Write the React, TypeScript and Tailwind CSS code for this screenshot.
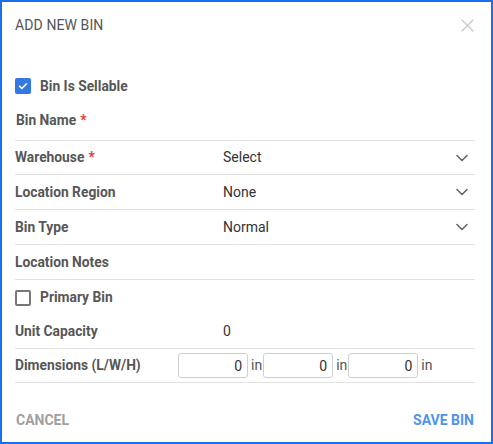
import React, { useState } from 'react';

const Chevron = () => (
  <svg width="14" height="14" viewBox="0 0 14 14" fill="none" className="text-[#666]">
    <path d="M2 4.5l5 5 5-5" stroke="currentColor" strokeWidth="1.6" strokeLinecap="round" strokeLinejoin="round" />
  </svg>
);

const Req = () => <span className="text-[#e53935] ml-1">*</span>;

const Checkbox = ({ checked, onChange }: { checked: boolean; onChange: () => void }) =>
  checked ? (
    <button onClick={onChange} className="w-4 h-4 rounded-[2px] bg-[#3478e5] flex items-center justify-center shrink-0">
      <svg width="12" height="12" viewBox="0 0 12 12" fill="none">
        <path d="M2.5 6.2l2.4 2.3L9.5 3.8" stroke="white" strokeWidth="1.6" strokeLinecap="round" strokeLinejoin="round" />
      </svg>
    </button>
  ) : (
    <button onClick={onChange} className="w-4 h-4 rounded-[2px] border-2 border-[#777] shrink-0" />
  );

const SelectRow = ({ label, value, required, h }: { label: string; value: string; required?: boolean; h: string }) => (
  <div className={`flex items-center border-b border-[#e2e2e2] ${h}`}>
    <div className="w-[208px] font-bold text-[#575757]">
      {label}
      {required && <Req />}
    </div>
    <div className="flex-1 text-[#333] text-[14px]">{value}</div>
    <div className="pr-[6px]">
      <Chevron />
    </div>
  </div>
);

const DimInput = () => (
  <>
    <input
      defaultValue="0"
      className="w-[70px] h-[25px] border border-[#cfcfcf] rounded-[3px] text-right pr-[5px] text-[14px] text-[#333] outline-none"
    />
    <span className="text-[#555] text-[14px] ml-[3px] mr-[1px]">in</span>
  </>
);

export default function App() {
  const [sellable, setSellable] = useState(true);
  const [primary, setPrimary] = useState(false);

  return (
    <div className="w-[493px] h-[444px] bg-white border-2 border-[#1a6ff0] text-[13.8px] font-['Roboto',sans-serif] flex flex-col">
      <div className="flex items-center justify-between pl-[13px] pr-[17px] pt-[2px] h-[44px]">
        <h1 className="text-[14px] text-[#555] tracking-[0.1px]">ADD NEW BIN</h1>
        <svg width="13" height="13" viewBox="0 0 13 13" fill="none">
          <path d="M1 1l11 11M12 1L1 12" stroke="#c9c9c9" strokeWidth="1.4" strokeLinecap="round" />
        </svg>
      </div>

      <div className="pl-[13px] pr-[16px] flex flex-col">
        <div className="flex items-center gap-[9px] h-[34px] mt-[23px]">
          <Checkbox checked={sellable} onChange={() => setSellable(!sellable)} />
          <span className="font-bold text-[#575757]">Bin Is Sellable</span>
        </div>
        <div className="flex items-center border-b border-[#e2e2e2] h-[38px] pl-[1px] pb-[3px]">
          <span className="font-bold text-[#575757]">
            Bin Name
            <Req />
          </span>
        </div>
        <SelectRow label="Warehouse" value="Select" required h="h-[34px]" />
        <SelectRow label="Location Region" value="None" h="h-[35px]" />
        <SelectRow label="Bin Type" value="Normal" h="h-[35px]" />
        <div className="flex items-center border-b border-[#e2e2e2] h-[35px]">
          <span className="font-bold text-[#575757]">Location Notes</span>
        </div>
        <div className="flex items-center gap-[9px] h-[35px]">
          <Checkbox checked={primary} onChange={() => setPrimary(!primary)} />
          <span className="font-bold text-[#575757]">Primary Bin</span>
        </div>
        <div className="flex items-center border-b border-[#e2e2e2] h-[34px]">
          <div className="w-[208px] font-bold text-[#575757]">Unit Capacity</div>
          <div className="text-[#333] text-[14px]">0</div>
        </div>
        <div className="flex items-center border-b border-[#e2e2e2] h-[34px]">
          <div className="w-[163px] font-bold text-[#575757]">Dimensions (L/W/H)</div>
          <DimInput />
          <DimInput />
          <DimInput />
        </div>
      </div>

      <div className="flex items-center justify-between pl-[14px] pr-[17px] mt-[27px]">
        <button className="font-bold text-[#a0a0a0] text-[14px]">CANCEL</button>
        <button className="font-bold text-[#4f94e8] text-[14px]">SAVE BIN</button>
      </div>
    </div>
  );
}
